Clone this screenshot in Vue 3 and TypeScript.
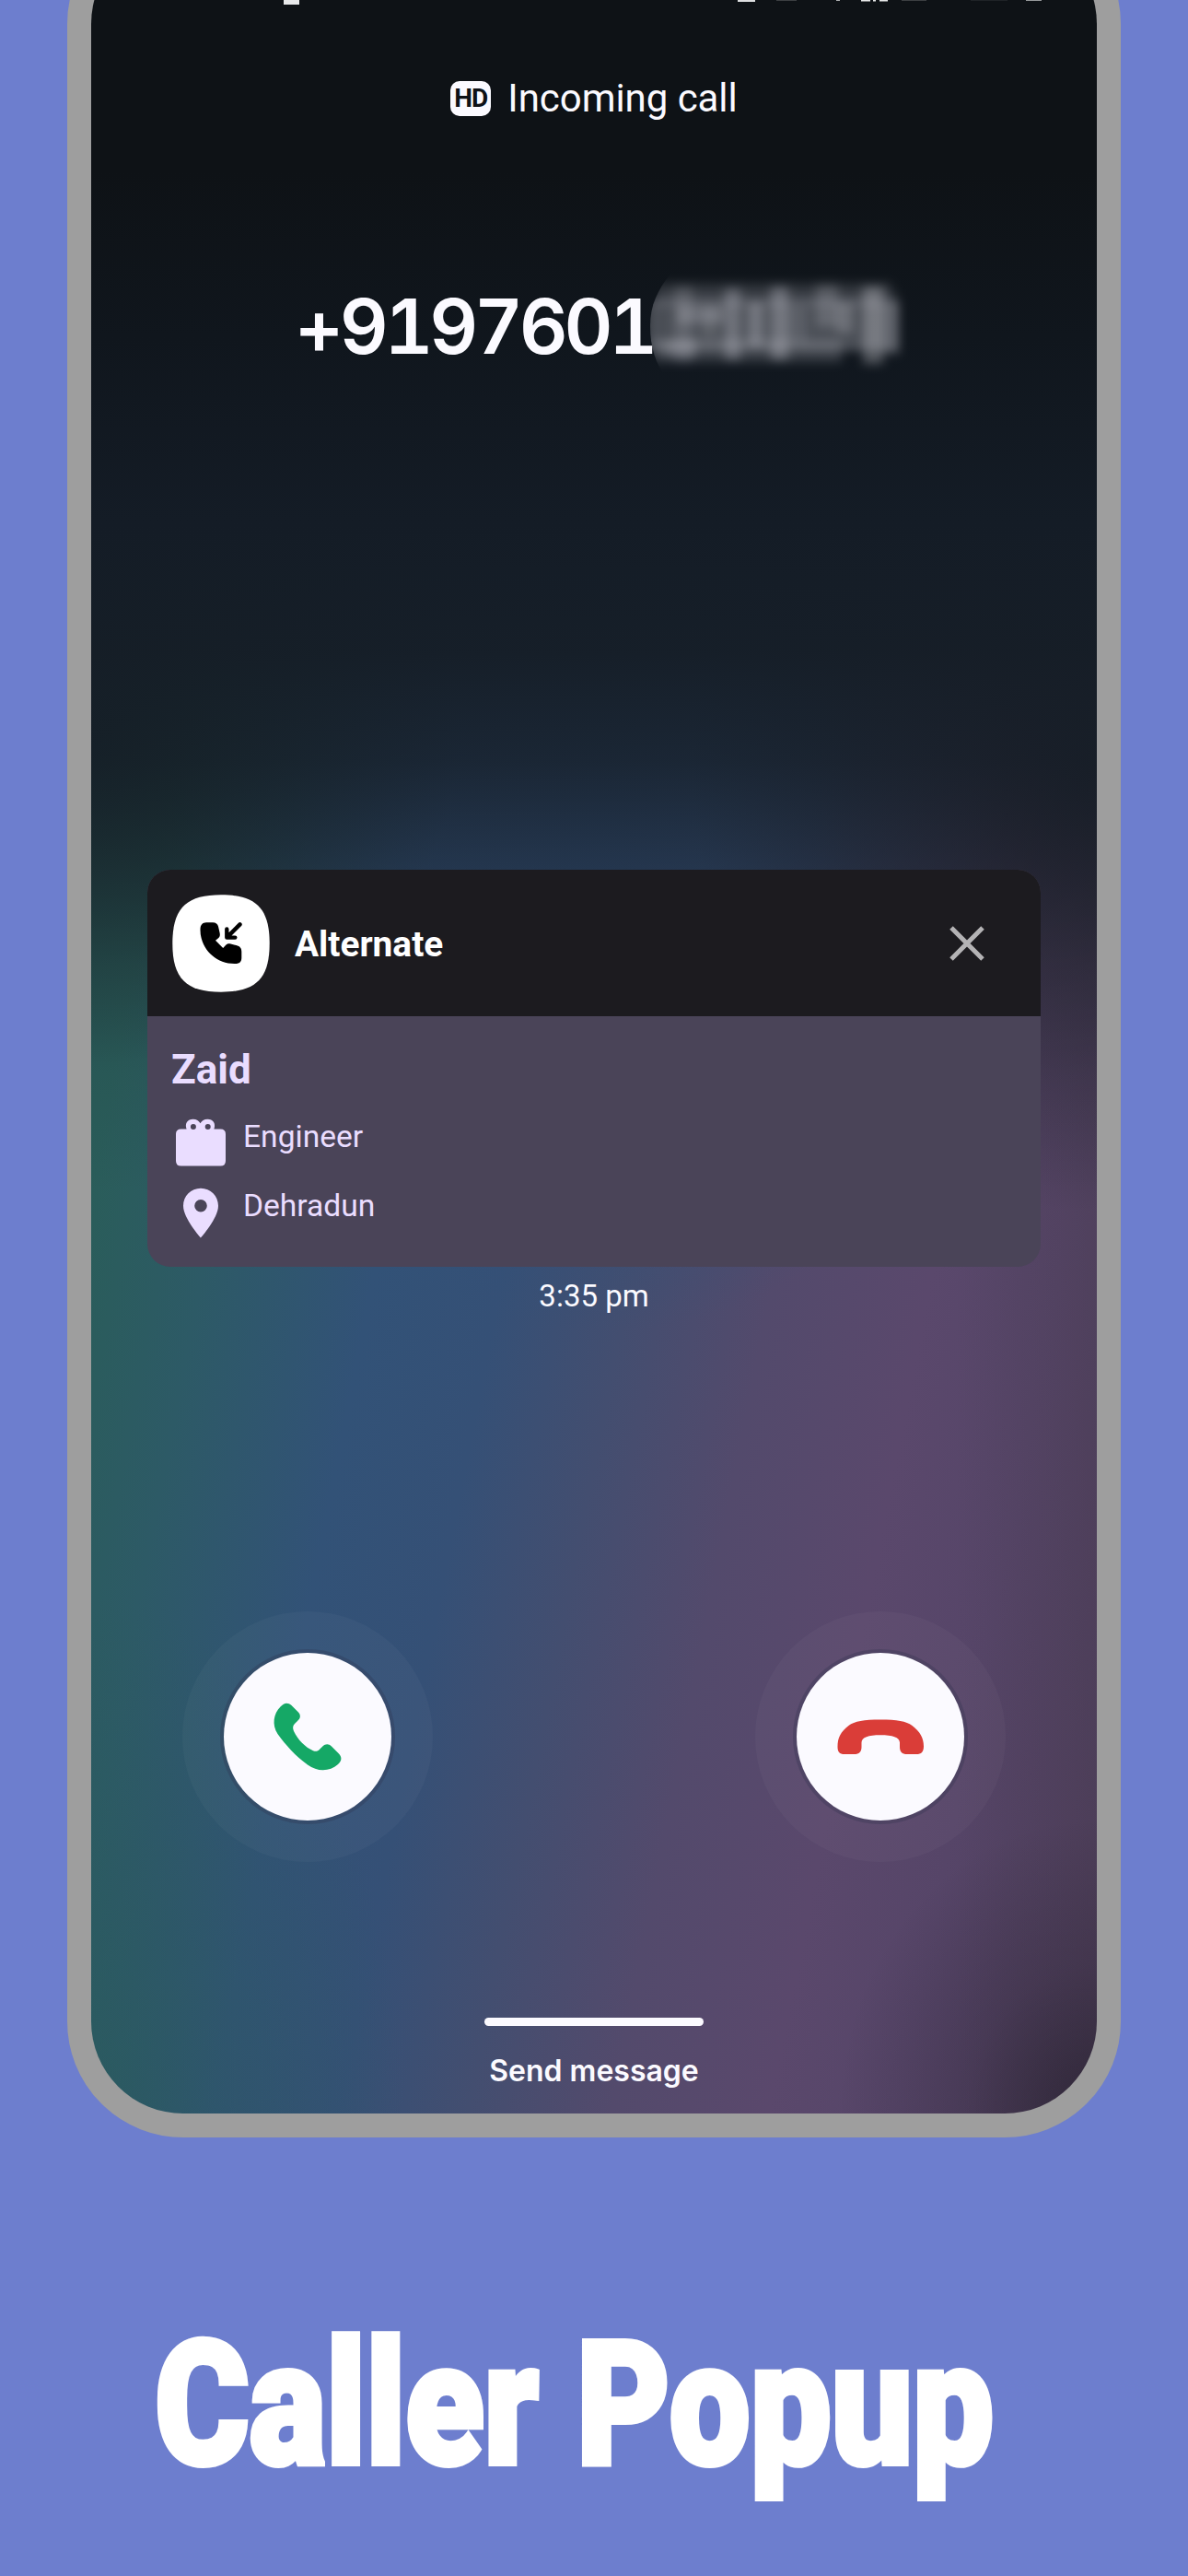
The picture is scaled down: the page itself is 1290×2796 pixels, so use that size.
<script setup lang="ts">
interface Detail {
  icon: 'work' | 'place'
  text: string
}

interface Smudge {
  x: number
  y: number
  w: number
  h: number
  o: number
}

const details: Detail[] = [
  { icon: 'work', text: 'Engineer' },
  { icon: 'place', text: 'Dehradun' },
]

// Soft blocks that cover the hidden half of the number
const smudges: Smudge[] = [
  { x: 4, y: 0, w: 256, h: 20, o: 0.14 },
  { x: 2, y: 8, w: 264, h: 18, o: 0.1 },
  { x: -6, y: 18, w: 274, h: 56, o: 0.3 },
  { x: 0, y: 62, w: 206, h: 24, o: 0.2 },
  { x: 24, y: 4, w: 20, h: 82, o: 0.17 },
  { x: 12, y: 62, w: 36, h: 18, o: 0.2 },
  { x: 28, y: 26, w: 50, h: 18, o: 0.24 },
  { x: 54, y: 26, w: 17, h: 32, o: 0.14 },
  { x: 79, y: 6, w: 17, h: 78, o: 0.28 },
  { x: 104, y: 22, w: 17, h: 46, o: 0.3 },
  { x: 129, y: 4, w: 19, h: 80, o: 0.3 },
  { x: 146, y: 26, w: 22, h: 38, o: 0.12 },
  { x: 178, y: 2, w: 24, h: 46, o: 0.2 },
  { x: 200, y: 22, w: 18, h: 32, o: 0.26 },
  { x: 229, y: 4, w: 22, h: 84, o: 0.32 },
  { x: 248, y: 24, w: 20, h: 54, o: 0.16 },
]

const status = [
  { x: 209, w: 17, h: 5, o: 0.95 },
  { x: 702, w: 19, h: 2, o: 0.9 },
  { x: 744, w: 22, h: 1, o: 0.2 },
  { x: 809, w: 4, h: 1, o: 0.7 },
  { x: 836, w: 10, h: 1.5, o: 0.95 },
  { x: 849, w: 3, h: 1.5, o: 0.95 },
  { x: 856, w: 9, h: 1.5, o: 0.95 },
  { x: 880, w: 27, h: 1, o: 0.2 },
  { x: 955, w: 40, h: 1, o: 0.08 },
  { x: 1015, w: 17, h: 1, o: 0.6 },
]
</script>

<template>
  <main class="page">
    <section class="phone">
      <div class="screen">
        <svg class="status" width="1092" height="6" viewBox="0 0 1092 6" aria-hidden="true">
          <rect
            v-for="s in status"
            :key="s.x"
            :x="s.x"
            y="0"
            :width="s.w"
            :height="s.h"
            fill="#f4f5f6"
            :opacity="s.o"
          />
        </svg>

        <header class="call-type">
          <span class="hd">HD</span>
          <span class="incoming">Incoming call</span>
        </header>

        <div class="number">
          <span class="digits">+9197601</span>
          <svg class="masked" width="290" height="115" viewBox="-2 -10 290 115" aria-hidden="true">
            <defs>
              <filter id="soft" x="-10%" y="-20%" width="120%" height="140%">
                <feGaussianBlur stdDeviation="5.5" />
              </filter>
              <clipPath id="edge">
                <path d="M20 -10C6 8 -2 24 -2 47C-2 70 4 88 16 105H290V-10Z" />
              </clipPath>
            </defs>
            <g clip-path="url(#edge)">
              <g filter="url(#soft)">
                <rect
                  v-for="(b, i) in smudges"
                  :key="i"
                  :x="b.x"
                  :y="b.y"
                  :width="b.w"
                  :height="b.h"
                  fill="#d2d2da"
                  :opacity="b.o"
                />
              </g>
            </g>
          </svg>
        </div>

        <article class="card">
          <div class="card-head">
            <svg class="app-icon" viewBox="0 0 106 106">
              <path
                d="M53 .3C91 .3 105.7 15 105.7 53S91 105.7 53 105.7 .3 91 .3 53 15 .3 53 .3Z"
                fill="#fff"
              />
              <path
                d="M30.5 37.5C30.5 33 33 30.2 37 30.2H44C47.5 30.2 49.3 31.8 50 34.5L51.6 41.5C52.2 44.5 51.6 46 49.5 47.8L47 49.8L55.2 58L58 55C59.5 53.4 61 53 63.5 53.6L69.5 55C73.5 56 75.3 58 75.3 62V68.5C75.3 73 73 75 68.5 75C47 75.5 30 58 30.5 37.5Z"
                fill="#000"
              />
              <path
                d="M59.3 37.5V46.6H68.3M60.3 45.6L73.5 32.4"
                fill="none"
                stroke="#000"
                stroke-width="4.4"
                stroke-linecap="round"
                stroke-linejoin="round"
              />
            </svg>
            <h2 class="app-name">Alternate</h2>
            <svg class="close" viewBox="0 0 40 40">
              <path d="M3 3L37 37M37 3L3 37" stroke="#b4b3b5" stroke-width="5" />
            </svg>
          </div>
          <div class="card-body">
            <h3 class="caller">Zaid</h3>
            <div v-for="d in details" :key="d.text" class="detail">
              <svg v-if="d.icon === 'work'" class="detail-icon" viewBox="0 0 64 64">
                <path
                  fill-rule="evenodd"
                  d="M10.5 15.4H16.6C14.2 9.4 18 4.8 23.5 4.8C27.5 4.8 30 6.8 31.5 9.3C33 6.8 35.5 4.8 39.5 4.8C45 4.8 48.8 9.4 46.4 15.4H53.5Q59 15.4 59 20.9V50Q59 55.6 53.5 55.6H10.5Q5 55.6 5 50V20.9Q5 15.4 10.5 15.4ZM23.9 10A3 3 0 1 0 23.9 16A3 3 0 1 0 23.9 10ZM39.7 10A3 3 0 1 0 39.7 16A3 3 0 1 0 39.7 10Z"
                  fill="#eaddff"
                />
              </svg>
              <svg v-else class="detail-icon" viewBox="0 0 64 64">
                <path
                  fill-rule="evenodd"
                  d="M32 4.8C21.4 4.8 13 13.2 13 23.8C13 37.5 32 58.5 32 58.5S51 37.5 51 23.8C51 13.2 42.6 4.8 32 4.8ZM32 17A6.8 6.8 0 1 0 32 30.6A6.8 6.8 0 1 0 32 17Z"
                  fill="#eaddff"
                />
              </svg>
              <span>{{ d.text }}</span>
            </div>
          </div>
        </article>

        <time class="time">3:35 pm</time>

        <div class="actions">
          <div class="halo">
            <button class="action" aria-label="Answer">
              <svg width="182" height="182" viewBox="0 0 182 182">
                <path
                  d="M61.5 58.5C65.5 54 69.5 53.5 73.5 57L80.5 64C84 67.5 83.5 71 80 74L77.2 76.8C74.8 79.2 74.6 81.5 76 85C80.5 94.5 88.5 102.5 97 106.2C99.8 107.4 102 107 104 104.8L107.3 101.5C110.5 98.6 114 98.6 117 101.5L124.5 109C128.5 113 128.5 117 124 121C115 129 102 129.5 91 121.5C78 112 67 100 58.5 88C52 78 54 66 61.5 58.5Z"
                  fill="#15a866"
                />
              </svg>
            </button>
          </div>
          <div class="halo">
            <button class="action" aria-label="Decline">
              <svg width="182" height="182" viewBox="0 0 182 182">
                <path
                  d="M91 72.5C109 72.5 119 74 125.5 79C134 85.5 138 92 138 101.5C138 107.5 135.5 110 130 110H120C114.5 110 112 107.5 112 102V97.5C112 91.5 104 89.2 91 89.2S70.5 91.5 70.5 97.5V102C70.5 107.5 68 110 62.5 110H52C46.5 110 44.5 107.5 44.5 102C44.5 92 48 85.5 56.5 79C63 74 73 72.5 91 72.5Z"
                  fill="#da3d38"
                />
              </svg>
            </button>
          </div>
        </div>

        <div class="handle"></div>
        <p class="send">Send message</p>
      </div>
    </section>

    <svg class="headline" width="1290" height="290" viewBox="0 0 1290 290">
      <text x="168" y="202" textLength="417" lengthAdjust="spacingAndGlyphs">Caller</text>
      <text x="626" y="202" textLength="453" lengthAdjust="spacingAndGlyphs">Popup</text>
    </svg>
  </main>
</template>

<style>
body {
  margin: 0;
  background: #6d7ece;
}
</style>

<style scoped>
.page {
  width: 1290px;
  height: 2796px;
  overflow: hidden;
  background: #6d7ece;
  display: flex;
  flex-direction: column;
  align-items: center;
}

h2,
h3,
p {
  margin: 0;
}

.phone {
  box-sizing: border-box;
  flex: none;
  width: 1144px;
  height: 2420px;
  margin-top: -100px;
  border: 26px solid #9e9e9e;
  border-radius: 126px;
  background: #9e9e9e;
}

.screen {
  box-sizing: border-box;
  width: 1092px;
  height: 2368px;
  padding-top: 74px;
  border-radius: 100px;
  overflow: hidden;
  display: flex;
  flex-direction: column;
  align-items: center;
  color: #fbfaff;
  background:
    linear-gradient(
      180deg,
      #0e1216 0,
      #0e1216 260px,
      #10161d 440px,
      #141c26 640px,
      rgba(21, 29, 38, 0.97) 780px,
      rgba(21, 29, 38, 0.82) 900px,
      rgba(22, 29, 38, 0.5) 1020px,
      rgba(24, 30, 38, 0.25) 1120px,
      rgba(24, 30, 38, 0.08) 1240px,
      rgba(24, 30, 38, 0) 1370px
    ),
    radial-gradient(ellipse 440px 480px at 100% 910px, rgba(26, 29, 38, 0.85), rgba(26, 29, 38, 0) 100%),
    radial-gradient(ellipse 400px 360px at 0 870px, rgba(20, 32, 36, 0.75), rgba(20, 32, 36, 0) 100%),
    radial-gradient(
      ellipse 280px 320px at 100% 100%,
      rgba(38, 32, 46, 0.75),
      rgba(38, 32, 46, 0.25) 50%,
      rgba(38, 32, 46, 0) 100%
    ),
    linear-gradient(90deg, rgba(70, 58, 76, 0) 86%, rgba(70, 58, 76, 0.35) 100%),
    radial-gradient(ellipse 340px 560px at 0 100%, rgba(40, 92, 88, 0.6), rgba(40, 92, 88, 0) 100%),
    radial-gradient(
      ellipse 460px 560px at 560px 960px,
      rgba(50, 80, 120, 0.95),
      rgba(50, 80, 120, 0.7) 50%,
      rgba(50, 80, 120, 0) 100%
    ),
    linear-gradient(
      101deg,
      #2a5d5a 17%,
      #2d5a66 26%,
      #325277 38%,
      #355076 47%,
      #434e70 56%,
      #534a6c 66%,
      #5a486c 77%,
      #564568 86%,
      #4e3e5c 100%
    );
}

.status {
  flex: none;
  display: block;
}

.call-type {
  flex: none;
  height: 48px;
  margin-top: 77px;
  display: flex;
  align-items: center;
  gap: 18px;
}

.hd {
  width: 44px;
  height: 38px;
  border-radius: 10px;
  background: #fbfaff;
  color: #0e1216;
  font: 700 28px/38px Roboto, sans-serif;
  letter-spacing: -1px;
  text-align: center;
}

.incoming {
  font: 400 42px/48px Roboto, sans-serif;
  letter-spacing: -0.05px;
}

.number {
  flex: none;
  width: 1092px;
  height: 115px;
  margin-top: 166px;
  display: flex;
  align-items: center;
}

.digits {
  width: 611px;
  text-align: right;
  font: 600 82px/113px Inter, sans-serif;
  font-feature-settings: 'tnum';
  letter-spacing: -4.3px;
  white-space: nowrap;
}

.masked {
  flex: none;
  display: block;
  margin-left: -4px;
}

.card {
  flex: none;
  width: 970px;
  height: 431px;
  margin-top: 532px;
  border-radius: 25px;
  overflow: hidden;
  background: #4a4458;
}

.card-head {
  box-sizing: border-box;
  height: 159px;
  padding: 0 60px 0 27px;
  display: flex;
  align-items: center;
  background: #1c1b1f;
}

.app-icon {
  width: 106px;
  height: 106px;
}

.app-name {
  flex: 1;
  margin-left: 27px;
  color: #fff;
  font: 700 38.8px/48px Roboto, sans-serif;
  padding-top: 2px;
}

.close {
  width: 40px;
  height: 40px;
}

.card-body {
  padding: 29px 26px 0;
  color: #eaddff;
}

.caller {
  height: 59px;
  font: 700 44px/58px Roboto, sans-serif;
}

.detail {
  height: 75px;
  display: flex;
  gap: 14px;
  font: 400 33.6px/86px Roboto, sans-serif;
}

.detail-icon {
  width: 64px;
  height: 64px;
  margin-top: 19px;
}

.time {
  flex: none;
  margin-top: 12px;
  font: 400 33px/40px Roboto, sans-serif;
}

.actions {
  flex: none;
  width: 894px;
  margin-top: 322px;
  display: flex;
  justify-content: space-between;
}

.halo {
  width: 272px;
  height: 272px;
  border-radius: 50%;
  background: rgba(255, 255, 255, 0.03);
  display: flex;
  align-items: center;
  justify-content: center;
}

.action {
  width: 182px;
  height: 182px;
  padding: 0;
  border: 0;
  border-radius: 50%;
  background: #fbfaff;
  box-shadow: 0 0 0 4px rgba(45, 50, 75, 0.3);
}

.action svg {
  display: block;
}

.handle {
  flex: none;
  width: 238px;
  height: 9px;
  margin-top: 169px;
  border-radius: 5px;
  background: #fbfaff;
}

.send {
  margin-top: 27px;
  font: 600 32px/44px Inter, sans-serif;
}

.headline {
  display: block;
  flex: none;
  margin-top: 152px;
  font: 900 188px Roboto, sans-serif;
  fill: #fff;
  stroke: #fff;
  stroke-width: 6px;
  stroke-linejoin: miter;
  stroke-miterlimit: 2;
}
</style>
